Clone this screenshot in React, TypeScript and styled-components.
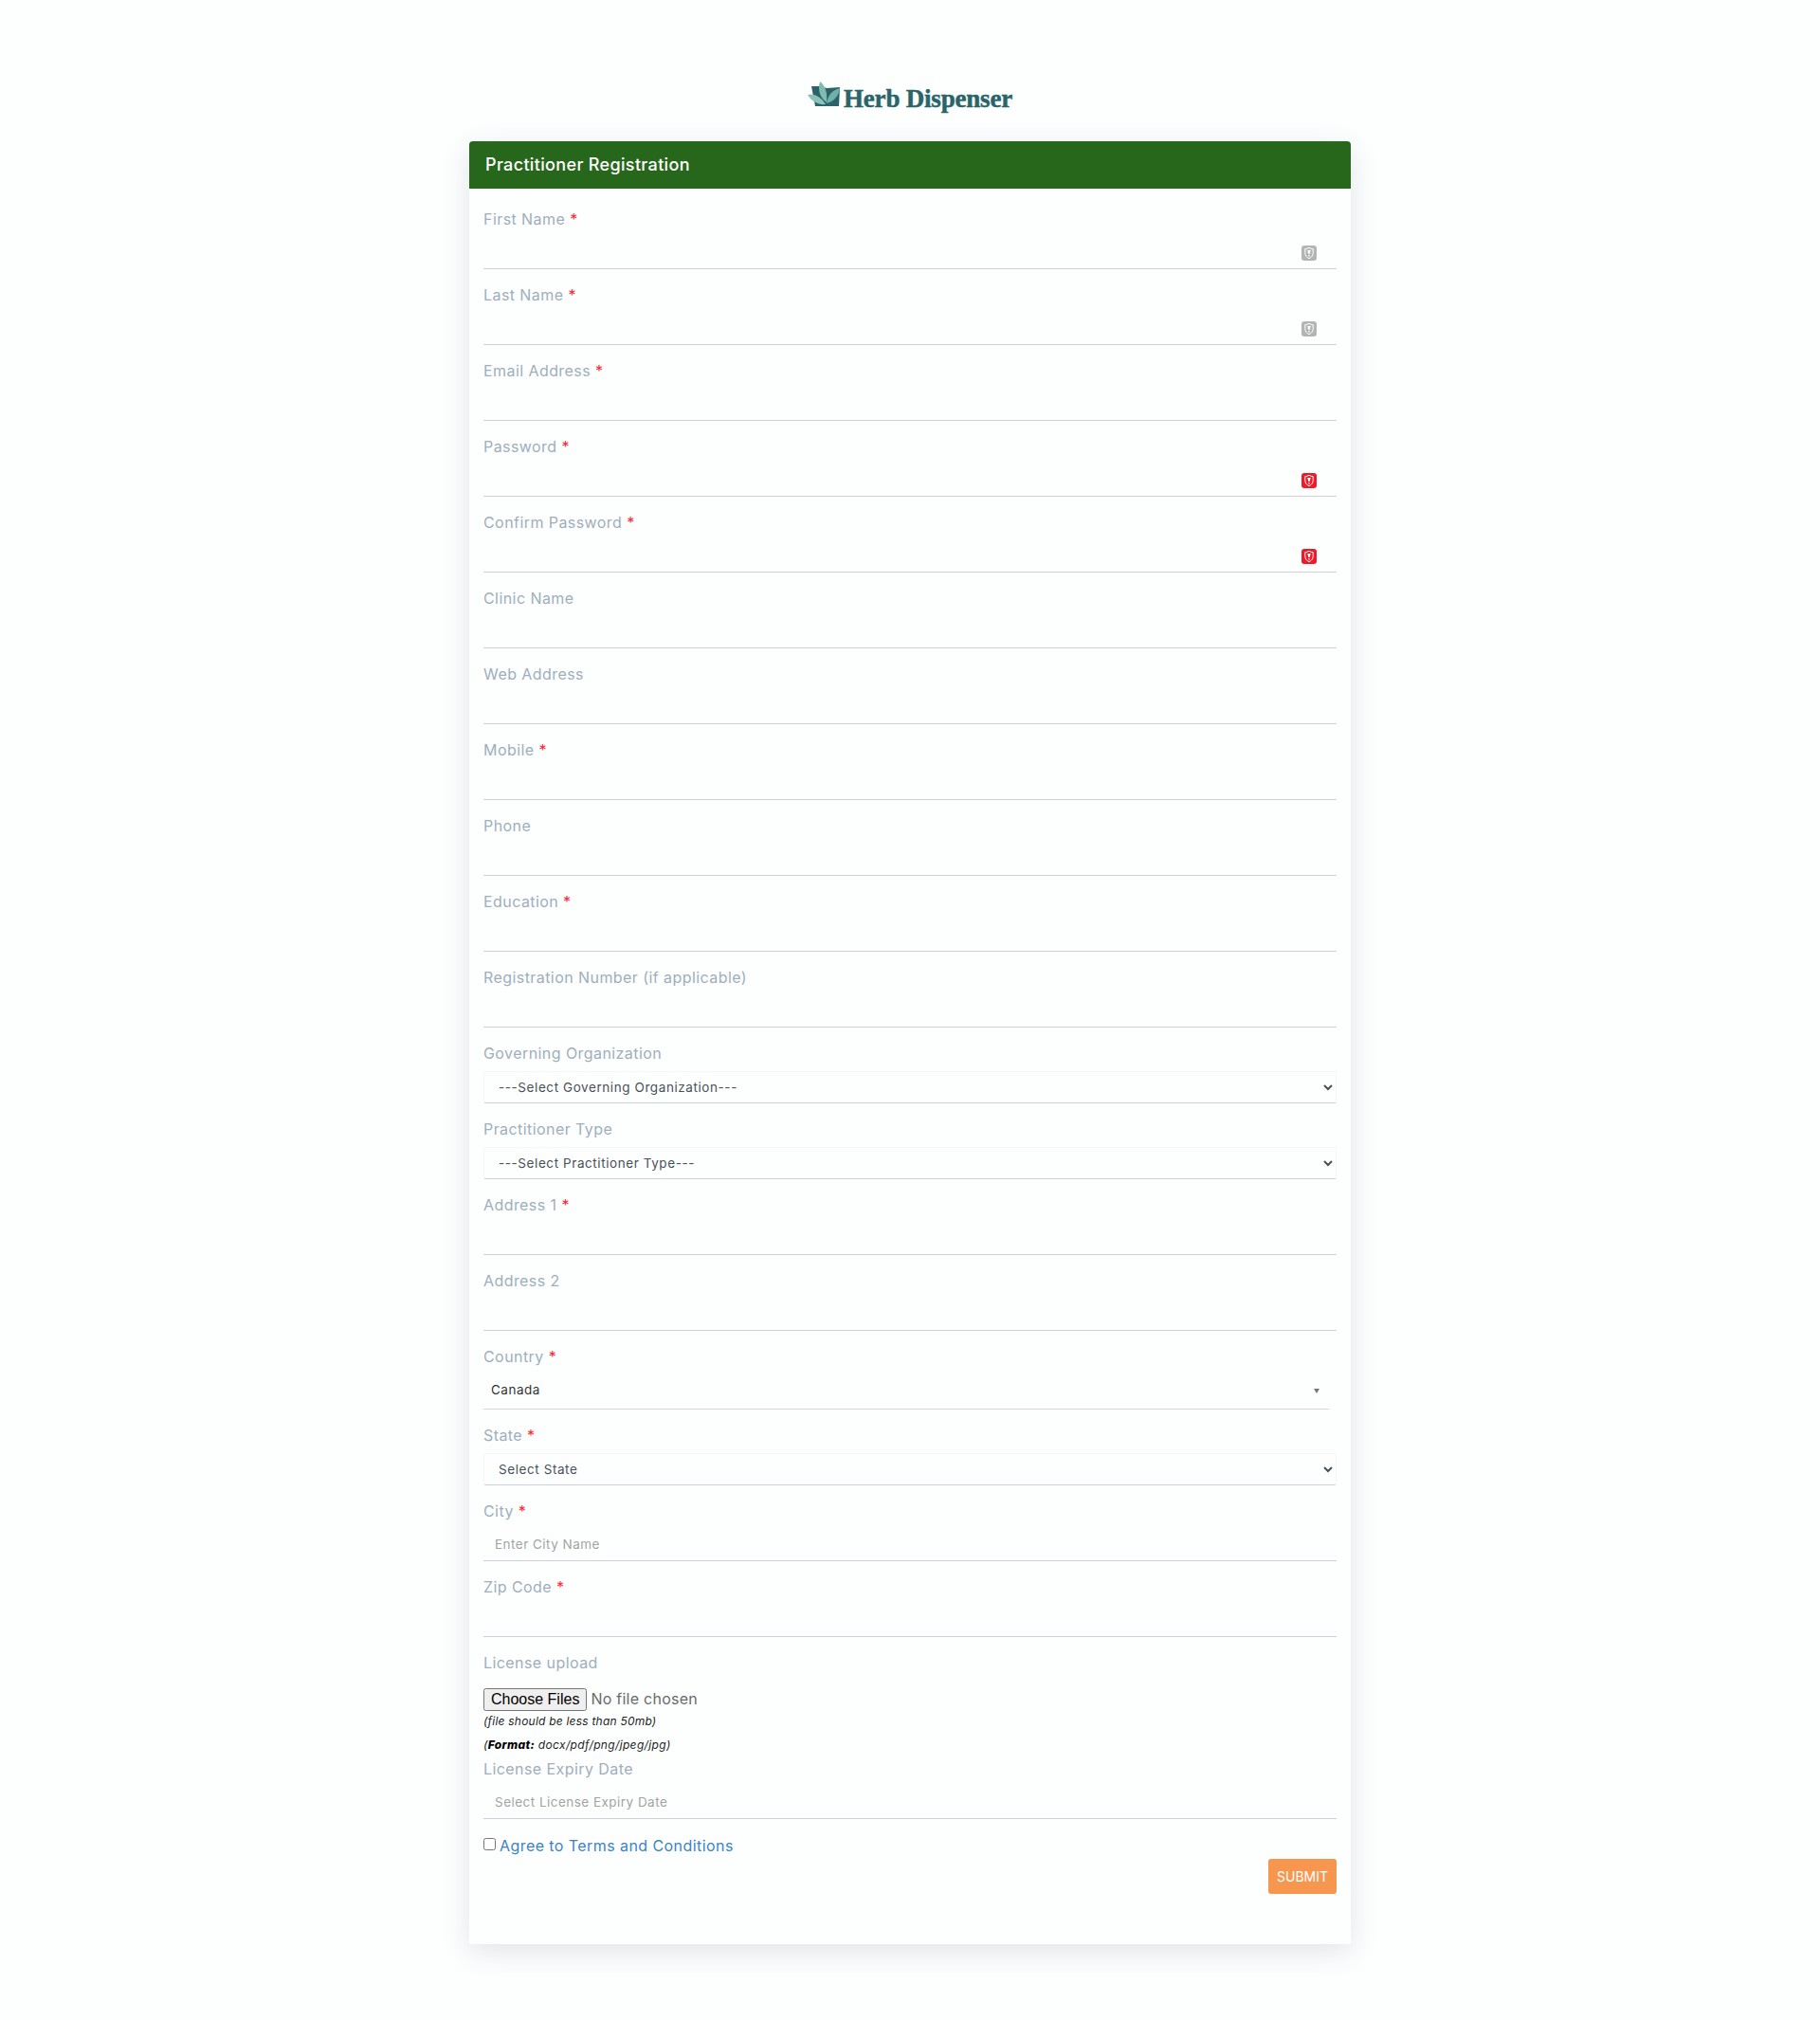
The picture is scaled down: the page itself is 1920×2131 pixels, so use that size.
import React from "react";
import styled, { createGlobalStyle } from "styled-components";

const GlobalStyle = createGlobalStyle`
  html, body {
    margin: 0;
    padding: 0;
    background: #fdffff;
    font-family: Inter, "Liberation Sans", sans-serif;
  }
`;

const Page = styled.div`
  min-height: 2131px;
  padding-top: 85px;
  box-sizing: border-box;
`;

const LogoRow = styled.div`
  height: 64px;
  display: flex;
  justify-content: center;
  align-items: flex-start;
  gap: 2px;
`;

const LogoText = styled.span`
  font-family: "Liberation Serif", serif;
  font-weight: 700;
  font-size: 27px;
  line-height: 36px;
  margin-top: 1px;
  letter-spacing: -0.2px;
  color: #2a6469;
  -webkit-text-stroke: 0.5px #2a6469;
`;

const Card = styled.main`
  width: 930px;
  margin: 0 auto;
  background: #fdffff;
  border-radius: 4px 4px 0 0;
  box-shadow: 0 8px 30px rgba(40, 50, 60, 0.13);
`;

const CardHeader = styled.h1`
  margin: 0;
  height: 50px;
  padding-left: 17px;
  background: #27671b;
  border-radius: 4px 4px 0 0;
  color: #fff;
  font-size: 18px;
  font-weight: 500;
  line-height: 49px;
  letter-spacing: 0.34px;
`;

const Form = styled.form`
  padding: 21px 15px 53px;
`;

const Field = styled.div`
  margin-bottom: 16px;
`;

const Label = styled.label`
  display: block;
  height: 24px;
  margin-bottom: 6px;
  color: #a0aebb;
  font-size: 16px;
  line-height: 22px;
  letter-spacing: 0.43px;
`;

const Star = styled.span`
  color: #ff1f2f;
`;

const InputWrap = styled.div`
  position: relative;
`;

const TextInput = styled.input`
  display: block;
  box-sizing: border-box;
  width: 100%;
  height: 34px;
  padding: 0 12px 2px;
  border: 0;
  border-bottom: 1px solid #ced1d5;
  background: transparent;
  font-family: inherit;
  font-size: 13.5px;
  letter-spacing: 0.47px;
  outline: none;

  &::placeholder {
    color: #a3a3a3;
    opacity: 1;
  }
`;

const Shield = styled.svg`
  position: absolute;
  right: 21px;
  top: 9px;
`;

const Select = styled.select`
  display: block;
  box-sizing: border-box;
  width: 100%;
  height: 34px;
  padding: 0 11px;
  border: 1px solid #f4f5f6;
  border-bottom-color: #ced1d5;
  border-radius: 2px;
  background: transparent;
  color: #495057;
  font-family: inherit;
  font-size: 13.5px;
  letter-spacing: 0.58px;
`;

const CountryBox = styled.div`
  display: flex;
  align-items: center;
  justify-content: space-between;
  box-sizing: border-box;
  width: 892px;
  height: 37px;
  padding: 0 10px 4px 8px;
  border-bottom: 1px solid #d8d6db;
  color: #333;
  font-size: 13.5px;
  letter-spacing: 0.5px;
`;

const Caret = styled.span`
  width: 0;
  height: 0;
  margin-top: 3px;
  border-left: 3.5px solid transparent;
  border-right: 3.5px solid transparent;
  border-top: 5px solid #777;
`;

const UploadLabel = styled(Label)`
  margin-bottom: 14px;
`;

const FileInput = styled.input`
  display: block;
  height: 24px;
  color: #6a6a6a;
  font-family: Inter, sans-serif;
  font-size: 16px;
  letter-spacing: 0.25px;

  &::file-selector-button {
    font-family: "Liberation Sans", sans-serif;
    font-size: 16px;
    letter-spacing: 0;
  }
`;

const Note = styled.p`
  margin: 0 0 4px;
  height: 21px;
  color: #222;
  font-size: 12px;
  font-style: italic;
  line-height: 21px;
  letter-spacing: 0.22px;
`;

const FormatNote = styled(Note)`
  letter-spacing: 0.35px;

  b {
    color: #000;
    font-weight: 800;
  }
`;

const TermsRow = styled.div`
  display: flex;
  align-items: flex-start;
  height: 26px;
`;

const Check = styled.input`
  width: 13px;
  height: 13px;
  margin: 4px 4px 0 0;
`;

const TermsLink = styled.a`
  color: #3c83c4;
  font-size: 16px;
  line-height: 24px;
  letter-spacing: 0.43px;
  text-decoration: none;
`;

const Actions = styled.div`
  display: flex;
  justify-content: flex-end;
`;

const SubmitButton = styled.button`
  width: 72px;
  height: 37px;
  padding: 0;
  border: 0;
  border-radius: 3px;
  background: #f7964f;
  color: #fff;
  font-family: inherit;
  font-size: 14px;
`;

const ShieldIcon = ({ color }: { color: string }) => (
  <Shield width="16" height="16" viewBox="0 0 16 16" aria-hidden="true">
    <rect width="16" height="16" rx="3" fill={color} />
    <path
      d="M8 2.3c1.4.9 2.8 1.3 4.2 1.4v4c0 2.8-1.7 4.7-4.2 6-2.5-1.3-4.2-3.2-4.2-6v-4c1.4-.1 2.8-.5 4.2-1.4z"
      fill="none"
      stroke="#fff"
      strokeWidth="1"
    />
    <path d="M6.3 5h3.4L8.6 9H7.4zM7.3 10h1.4v1.5H7.3z" fill="#fff" />
  </Shield>
);

const HerbLogo = () => (
  <svg width="36" height="30" viewBox="0 0 36 30" aria-hidden="true">
    <path d="M4 6h10l6 2 14-1-1 20H8z" fill="#2a6469" />
    <path d="M13 1c5 4 8 10 7 22-6-4-10-12-7-22z" fill="#80bbb0" />
    <path d="M34 8c-1 8-6 14-14 16 1-8 6-14 14-16z" fill="#6fb0a8" />
    <path d="M0 15c6-2 14 2 19 10-7 1-15-3-19-10z" fill="#8cc2b8" />
  </svg>
);

type FieldDef = { label: string; required?: boolean; shield?: string };

const beforeSelects: FieldDef[] = [
  { label: "First Name", required: true, shield: "#b4b4b4" },
  { label: "Last Name", required: true, shield: "#b4b4b4" },
  { label: "Email Address", required: true },
  { label: "Password", required: true, shield: "#ee1b2a" },
  { label: "Confirm Password", required: true, shield: "#ee1b2a" },
  { label: "Clinic Name" },
  { label: "Web Address" },
  { label: "Mobile", required: true },
  { label: "Phone" },
  { label: "Education", required: true },
  { label: "Registration Number (if applicable)" },
];

const FieldLabel = ({ label, required }: FieldDef) => (
  <Label>
    {label}
    {required && <Star> *</Star>}
  </Label>
);

const TextField = ({ label, required, shield, placeholder }: FieldDef & { placeholder?: string }) => (
  <Field>
    <FieldLabel label={label} required={required} />
    <InputWrap>
      <TextInput type="text" placeholder={placeholder} />
      {shield && <ShieldIcon color={shield} />}
    </InputWrap>
  </Field>
);

const SelectField = ({ label, required, option }: FieldDef & { option: string }) => (
  <Field>
    <FieldLabel label={label} required={required} />
    <Select>
      <option>{option}</option>
    </Select>
  </Field>
);

export default function App() {
  return (
    <Page>
      <GlobalStyle />
      <LogoRow>
        <HerbLogo />
        <LogoText>Herb Dispenser</LogoText>
      </LogoRow>
      <Card>
        <CardHeader>Practitioner Registration</CardHeader>
        <Form>
          {beforeSelects.map((f) => (
            <TextField key={f.label} {...f} />
          ))}
          <SelectField label="Governing Organization" option="---Select Governing Organization---" />
          <SelectField label="Practitioner Type" option="---Select Practitioner Type---" />
          <TextField label="Address 1" required />
          <TextField label="Address 2" />
          <Field>
            <FieldLabel label="Country" required />
            <CountryBox>
              Canada
              <Caret />
            </CountryBox>
          </Field>
          <SelectField label="State" required option="Select State" />
          <TextField label="City" required placeholder="Enter City Name" />
          <TextField label="Zip Code" required />
          <UploadLabel>License upload</UploadLabel>
          <FileInput type="file" multiple />
          <Note>(file should be less than 50mb)</Note>
          <FormatNote>
            (<b>Format:</b> docx/pdf/png/jpeg/jpg)
          </FormatNote>
          <TextField label="License Expiry Date" placeholder="Select License Expiry Date" />
          <TermsRow>
            <Check type="checkbox" />
            <TermsLink href="#terms">Agree to Terms and Conditions</TermsLink>
          </TermsRow>
          <Actions>
            <SubmitButton type="button">SUBMIT</SubmitButton>
          </Actions>
        </Form>
      </Card>
    </Page>
  );
}
